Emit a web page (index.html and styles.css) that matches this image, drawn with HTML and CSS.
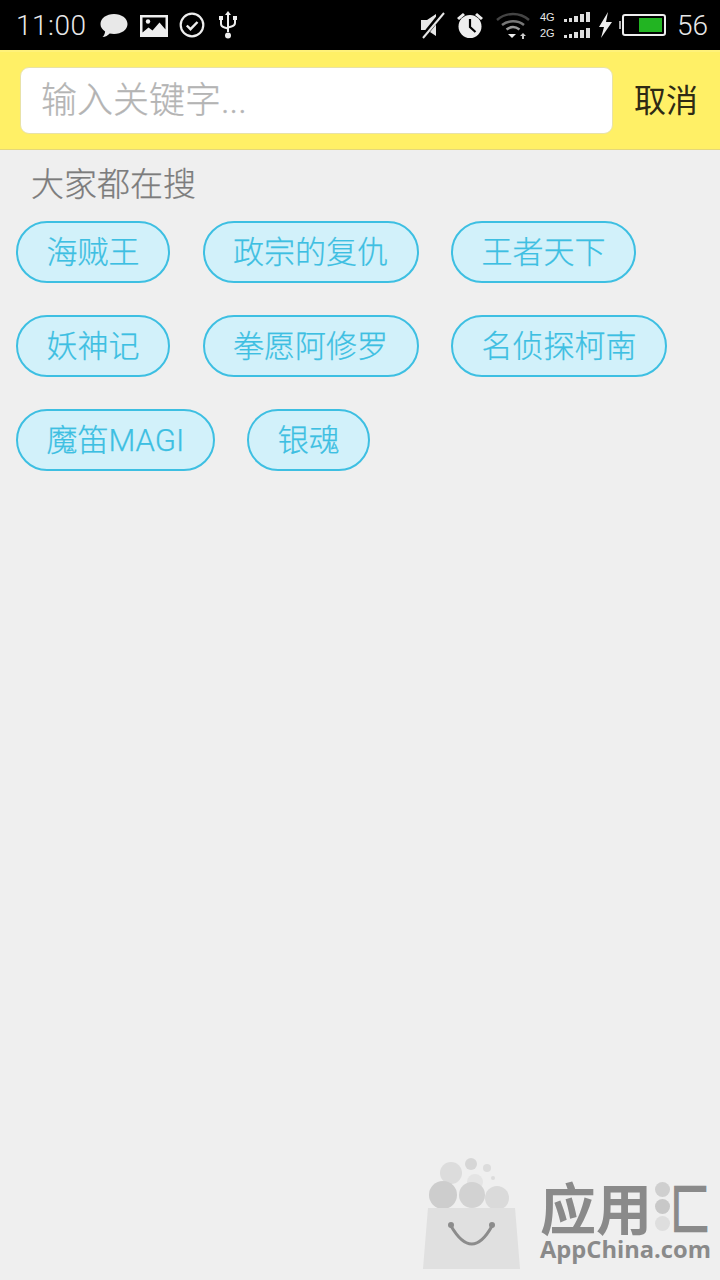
FILE: index.html
```html
<!DOCTYPE html>
<html lang="zh-CN">
<head>
    <meta charset="UTF-8">
    <meta name="viewport" content="width=device-width, initial-scale=1.0">
    <title>搜索</title>
    <link rel="stylesheet" href="styles.css">
</head>
<body>
    <div class="status-bar">
        <div class="status-left">
            <span class="clock">11:00</span>
            <svg class="icon icon-chat" width="30" height="28" viewBox="0 0 30 28"><path d="M15 3c7.500 0 13.500 4.300 13.500 10S22.500 23 15 23c-1.500 0-3-.2-4.300-.5C9 24.500 6.500 25.800 3.500 26c1.500-1.500 2.500-3.500 2.600-5.600C3 18.500 1.500 16 1.500 13 1.500 7.300 7.500 3 15 3z" fill="#e8e8e8"/></svg>
            <svg class="icon" width="28" height="24" viewBox="0 0 28 24"><path d="M0 2h28v22H0z" fill="#eee"/><path d="M2.500 4.500h23v12l-6-7-7 8-4-3-6 5z" fill="#000"/><circle cx="8" cy="8.500" r="2.200" fill="#eee"/></svg>
            <svg class="icon" width="26" height="26" viewBox="0 0 26 26"><circle cx="13" cy="13" r="11.300" fill="none" stroke="#eee" stroke-width="2.200"/><path d="M7.800 13.500l3.700 3.700 7-7.200" fill="none" stroke="#eee" stroke-width="2.400"/></svg>
            <svg class="icon icon-usb" width="20" height="30" viewBox="0 0 20 30"><path d="M10 1l3 4h-2v17h-2V5H7z" fill="#eee"/><path d="M3 9v5c0 2 1.500 3 3.500 3.500l3.500 1M17 9v4c0 2-1.500 3-3.500 3.500L10 17.500" fill="none" stroke="#eee" stroke-width="2"/><rect x="1" y="6" width="4" height="4" fill="#eee"/><rect x="15" y="6" width="4" height="4" fill="#eee"/><circle cx="10" cy="25.500" r="3" fill="#eee"/></svg>
        </div>
        <div class="status-right">
            <svg class="icon icon-mute" width="26" height="28" viewBox="0 0 26 28"><path d="M2 9h6l9-6v22l-9-6H2z" fill="#e6e6e6"/><path d="M24 1L3 27" stroke="#000" stroke-width="5"/><path d="M25 2L4 27" stroke="#e6e6e6" stroke-width="2"/></svg>
            <svg class="icon icon-alarm" width="28" height="28" viewBox="0 0 28 28"><circle cx="14" cy="15.500" r="11.500" fill="#eee"/><path d="M14 8v8l5.500 5" fill="none" stroke="#000" stroke-width="2.200"/><path d="M1 7l6-5 2 2-6 5zM27 7l-6-5-2 2 6 5z" fill="#eee"/></svg>
            <svg class="icon icon-wifi" width="34" height="28" viewBox="0 0 34 28"><path d="M1 9c9-8 23-8 32 0" fill="none" stroke="#444" stroke-width="2.400"/><path d="M6 14c6-5 16-5 22 0" fill="none" stroke="#777" stroke-width="2.400"/><path d="M10.500 18.500c4-3 9-3 13 0" fill="none" stroke="#999" stroke-width="2.400"/><path d="M12 23h8l-4 4z" fill="#eee"/><path d="M27 22l3 3h-2v3h-2v-3h-2z" fill="#ccc"/></svg>
            <div class="signal">
                <div class="signal-row"><span class="net">4G</span><i class="b1"></i><i class="b2"></i><i class="b3"></i><i class="b4"></i><i class="b5"></i></div>
                <div class="signal-row"><span class="net">2G</span><i class="b1"></i><i class="b2"></i><i class="b3"></i><i class="b4"></i><i class="b5"></i></div>
            </div>
            <svg class="icon icon-bolt" width="15" height="26" viewBox="0 0 15 26"><path d="M10 0L1 15h5l-3 11 11-16H8z" fill="#eee"/></svg>
            <div class="battery"><div class="battery-fill"></div></div>
            <span class="level">56</span>
        </div>
    </div>

    <header class="search-bar">
        <div class="search-input">输入关键字...</div>
        <span class="cancel">取消</span>
    </header>

    <h2 class="hot-title">大家都在搜</h2>
    <div class="tags">
        <span class="tag">海贼王</span>
        <span class="tag">政宗的复仇</span>
        <span class="tag">王者天下</span>
        <span class="tag">妖神记</span>
        <span class="tag">拳愿阿修罗</span>
        <span class="tag">名侦探柯南</span>
        <span class="tag">魔笛MAGI</span>
        <span class="tag">银魂</span>
    </div>

    <!-- watermark sits over the page corner -->
    <div class="watermark">
        <svg class="bag" width="104" height="114" viewBox="0 0 104 114">
            <circle cx="31" cy="15" r="11" fill="#dcdcdc"/>
            <circle cx="51" cy="6" r="6" fill="#d6d6d6"/>
            <circle cx="67" cy="10" r="4" fill="#dcdcdc"/>
            <circle cx="55" cy="24" r="8" fill="#e4e4e4"/>
            <circle cx="73" cy="20" r="2" fill="#dcdcdc"/>
            <circle cx="23" cy="37" r="14" fill="#cdcdcd"/>
            <circle cx="52" cy="37" r="13" fill="#d2d2d2"/>
            <circle cx="77" cy="40" r="12" fill="#dadada"/>
            <path d="M8 50h87l5 61H3z" fill="#e0e0e0"/>
            <path d="M31 68Q52 104 72 68" fill="none" stroke="#8c8c8c" stroke-width="3"/>
            <circle cx="31" cy="67" r="3" fill="#8c8c8c"/>
            <circle cx="72" cy="67" r="3" fill="#8c8c8c"/>
        </svg>
        <div class="brand">
            <div class="brand-name">
                <span>应用</span>
                <span class="brand-dots"><i class="dot-a"></i><i class="dot-b"></i><i class="dot-c"></i></span>
                <span class="brand-last">匚</span>
            </div>
            <div class="brand-url">AppChina.com</div>
        </div>
    </div>
</body>
</html>
```

FILE: styles.css
```css
* { box-sizing: border-box; }
html, body { margin: 0; padding: 0; }
body { width: 720px; height: 1280px; position: relative; overflow: hidden; background: #efefef; font-family: Roboto, "Noto Sans CJK SC", "Noto Sans", sans-serif; font-weight: 300; }

.status-bar { height: 50px; background: #000; color: #e8e8e8; display: flex; justify-content: space-between; align-items: center; padding: 0 12px 0 16px; }
.status-left, .status-right { display: flex; align-items: center; }
.icon { display: block; flex: none; }
.clock { font-family: Roboto, sans-serif; font-weight: 300; font-size: 28px; letter-spacing: 0.5px; margin-right: 12px; }
.status-left .icon { margin-right: 11px; }
.status-left .icon-usb { margin: 0 0 0 2px; }
.icon-mute { margin-right: 11px; }
.icon-alarm { margin-right: 12px; }
.icon-wifi { margin-right: 10px; }
.signal { display: flex; flex-direction: column; gap: 4px; margin-right: 8px; }
.signal-row { display: flex; align-items: flex-end; gap: 2px; height: 12px; }
.net { font-family: "Liberation Sans", sans-serif; font-size: 11px; line-height: 12px; width: 21px; }
.signal-row i { display: block; width: 3px; background: #ddd; margin-bottom: 1px; }
.signal-row i.b1 { height: 3px; margin-left: 1px; }
.signal-row i.b2 { height: 4px; }
.signal-row i.b3 { height: 6px; width: 4px; }
.signal-row i.b4 { height: 8px; width: 4px; }
.signal-row i.b5 { height: 10px; width: 4px; }
.icon-bolt { margin-right: 9px; }
.battery { width: 44px; height: 22px; border: 2px solid #eee; border-radius: 3px; display: flex; justify-content: flex-end; padding: 2px; margin-right: 11px; position: relative; }
.battery::before { content: ""; position: absolute; left: -5px; top: 5px; width: 2px; height: 8px; background: #aaa; }
.battery-fill { width: 23px; background: #22b422; }
.level { font-family: Roboto, sans-serif; font-weight: 300; font-size: 28px; }

.search-bar { height: 100px; background: #fff066; border-top: 2px solid #fff27a; border-bottom: 1px solid #e4d77a; display: flex; align-items: center; padding: 0 22px 0 20px; }
.search-input { width: 593px; height: 67px; background: #fff; border: 1px solid #e8e2a8; border-radius: 9px; padding-left: 20px; font-size: 36px; line-height: 66px; color: #b4b4b4; -webkit-text-stroke: 0.25px #b4b4b4; }
.cancel { margin-left: auto; font-size: 32px; line-height: 40px; margin-top: 1px; color: #2e2a14; font-weight: 400; }

.hot-title { margin: 14px 0 0 31px; font-size: 33px; font-weight: 300; line-height: 42px; color: #7c7c7c; -webkit-text-stroke: 0.25px #7c7c7c; }
.tags { display: flex; flex-wrap: wrap; gap: 32px 32.5px; margin: 15px 0 0 16px; width: 680px; }
.tag { height: 62px; padding: 0 28.5px; border: 2px solid #3dbfe2; border-radius: 31px; background: #d2f1fa; color: #3dbfe2; font-size: 31px; line-height: 60px; white-space: nowrap; -webkit-text-stroke: 0.25px #3dbfe2; }

.watermark { position: absolute; right: 8px; bottom: 8px; display: flex; align-items: flex-end; gap: 16px; }
.bag { display: block; }
.brand { width: 172px; color: #8a8a8a; margin-bottom: 9px; }
.brand-name { display: flex; align-items: center; height: 58px; font-family: "Noto Sans CJK SC", sans-serif; font-size: 56px; font-weight: 700; line-height: 58px; white-space: nowrap; }
.brand-dots { display: flex; flex-direction: column; gap: 2px; margin-left: 3px; }
.brand-dots i { display: block; width: 15px; height: 15px; border-radius: 50%; }
.brand-dots .dot-a { background: #cfcfcf; }
.brand-dots .dot-b { background: #c8c8c8; }
.brand-dots .dot-c { background: #dedede; }
.brand-last { display: block; width: 56px; margin-right: -16px; transform: scaleX(0.72); transform-origin: left center; }
.brand-url { font-family: "Open Sans", sans-serif; font-size: 23.7px; font-weight: 700; line-height: 28px; white-space: nowrap; }
```
